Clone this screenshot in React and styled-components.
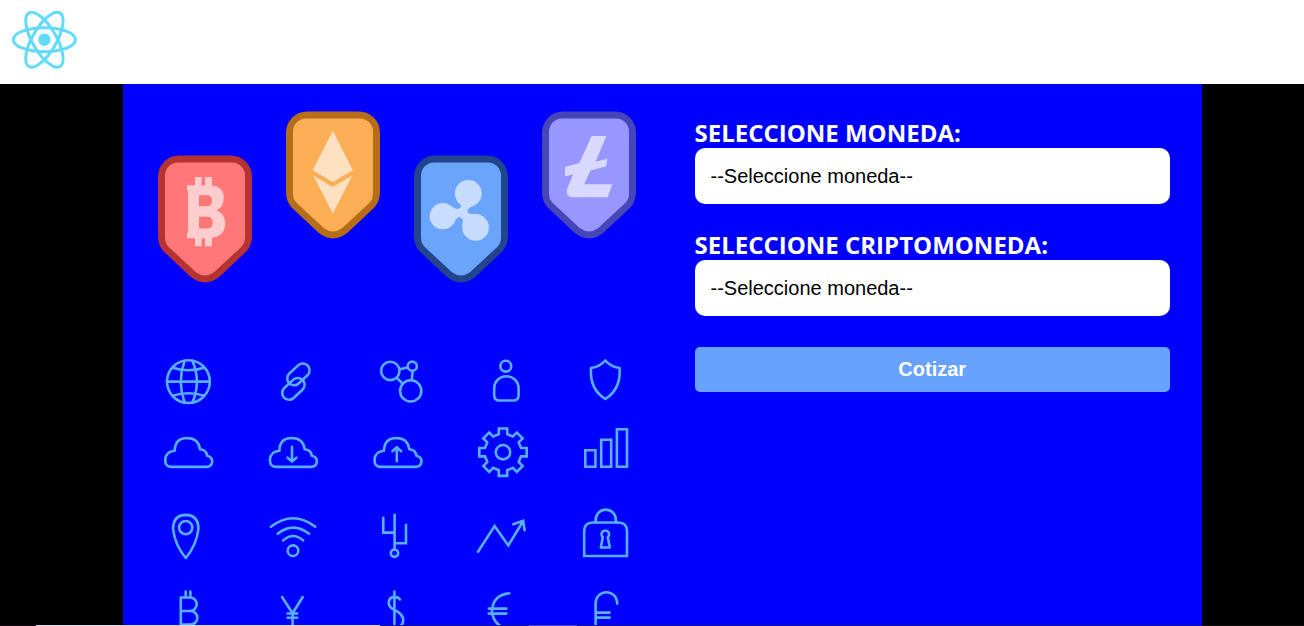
import React from "react";
import styled, { createGlobalStyle } from "styled-components";

const GlobalStyle = createGlobalStyle`
  *, *::before, *::after { box-sizing: border-box; }
  body { margin: 0; background: #000; font-family: "Open Sans", "Noto Sans", sans-serif; }
`;

const Page = styled.div`
  display: flex;
  flex-direction: column;
  height: 100vh;
  overflow: hidden;
  background: #000;
`;

const Header = styled.header`
  flex: none;
  height: 84px;
  background: #fff;
`;

const Logo = styled.svg`
  display: block;
  width: 88px;
  height: 80px;
`;

const Stage = styled.main`
  flex: 1;
  min-height: 0;
  padding: 0 102px 0 123px;
  overflow: hidden;
`;

const Panel = styled.section`
  display: grid;
  grid-template-columns: 1fr 1fr;
  min-height: 100%;
  background: #0000ff;
`;

const Artwork = styled.svg`
  display: block;
  width: 100%;
`;

const QuoteForm = styled.form`
  display: flex;
  flex-direction: column;
  padding: 34px 32px;
`;

const Field = styled.div`
  display: flex;
  flex-direction: column;
  margin-bottom: ${(p) => (p.$last ? "31px" : "26px")};
`;

const Label = styled.label`
  font-size: 24px;
  font-weight: 700;
  line-height: 30px;
  color: #fff;
  text-transform: uppercase;
  white-space: nowrap;
`;

const Select = styled.select`
  appearance: none;
  width: 100%;
  height: 56px;
  padding: 0 16px;
  border: 0;
  border-radius: 10px;
  background: #fff;
  color: #000;
  font: 20px "Liberation Sans", Arial, sans-serif;
`;

const SubmitButton = styled.button`
  height: 45px;
  border: 0;
  border-radius: 5px;
  background: #66a2fe;
  color: #fff;
  font: 700 20px "Liberation Sans", Arial, sans-serif;
  cursor: pointer;
`;

const BottomEdge = styled.footer`
  flex: none;
  display: grid;
  grid-template-columns: 36px 344px 149px 48px 1fr 102px;
  height: 1px;
`;

const EdgePart = styled.span`
  background: ${(p) => p.$color};
`;

const Badge = ({ x, y, fill, edge, children }) => (
  <g>
    <g transform={`translate(${x} ${y})`}>
      <path
        fill={edge}
        d="M21 0.3H73A21 21 0 0 1 94 21.3V80C94 87 92 93 87 97.5L62 121Q47 133.5 32 121L7 97.5C2 93 0 87 0 80V21.3A21 21 0 0 1 21 0.3Z"
      />
      <path
        fill={fill}
        d="M20 7.3H74A13 13 0 0 1 87 20.3V82C87 86 86 89 83 92L56 117Q47 123.5 38 117L11 92C8 89 7 86 7 82V20.3A13 13 0 0 1 20 7.3Z"
      />
    </g>
    <g fill="#fff" opacity="0.63">
      {children}
    </g>
  </g>
);

const CLOUD =
  "M171 466.7Q165.4 466.5 165.2 460Q165.5 451 174.7 450.5Q175 438 187 437.8Q198.5 438 200 449Q206.5 449.5 207 455.5Q212.3 456.5 212.2 461.5Q211.5 466.7 206.5 466.7Z";

const GearIcon = ({ x, y }) => {
  const points = [];
  for (let k = 0; k < 8; k += 1) {
    const a = (k * Math.PI) / 4;
    [[-4.2, -18], [-4.2, -23.7], [4.2, -23.7], [4.2, -18]].forEach(([px, py]) => {
      points.push(
        `${(x + px * Math.cos(a) - py * Math.sin(a)).toFixed(1)},${(
          y + px * Math.sin(a) + py * Math.cos(a)
        ).toFixed(1)}`
      );
    });
  }
  return (
    <g>
      <polygon points={points.join(" ")} />
      <circle cx={x} cy={y} r="7.2" />
    </g>
  );
};

const Illustration = () => (
  <Artwork viewBox="123 83.8 539.5 560" role="img" aria-label="Criptomonedas">
    <Badge x={158} y={155} fill="#ff7777" edge="#b53333">
      <path
        fillRule="evenodd"
        d="M187 185H195V176.7H201.7V185H205V176.7H212V185.3Q223.8 187 223.8 197Q223.8 207 216.5 210Q225.3 213.5 225.3 223Q225.3 235.5 212 237.6V246H205V238H201.7V246H195V238H187V232.5H188V190.5H187ZM199 195V206H207Q212 206 212 200.5Q212 195 207 195ZM199 216.5V228.3H207.5Q212.7 228.3 212.7 222.4Q212.7 216.5 207.5 216.5Z"
      />
    </Badge>
    <Badge x={286} y={111} fill="#fcae57" edge="#b56e17">
      <path d="M332.8 130.5L352.8 170L332.8 181.7L312.8 170ZM313.3 175.3L332.8 186.7L352.3 175.3L332.8 213.3Z" />
    </Badge>
    <Badge x={414} y={155} fill="#6aa5fb" edge="#22458d">
      <circle cx="468.3" cy="193.3" r="13.4" />
      <circle cx="442.8" cy="216" r="13.1" />
      <circle cx="475.6" cy="227.2" r="13.3" />
      <path d="M457 200.5C461.8 204.6 461.5 206.6 460 207.7C457.6 209.5 455 208.3 451 206L453 223.5C456.8 217.4 458.8 216.6 460.4 217.4C463.2 218.4 463 221 462.4 226L477 214C470 214.2 468 213.4 467.6 211.6C467.2 209.2 469 207.2 474.5 205Z" />
    </Badge>
    <Badge x={542} y={111} fill="#9797ff" edge="#4646b8">
      <path d="M591.7 135.7H606.3L595.6 161.5L607.3 158.5L606.3 166L590.5 170.3L584.3 184H612.3L607.7 197H572Q565.5 196 567 189L573 174.3L565 176V166.7L579.3 162.7Z" />
    </Badge>

    <g fill="none" stroke="#58aeff" strokeWidth="2.6" strokeLinejoin="round" strokeLinecap="round">
      <circle cx="188.4" cy="381.4" r="21.4" />
      <path d="M167 381.4H209.8M184.6 360.5Q177 381.4 184.6 402.3M192.4 360.5Q201.4 381.4 192.4 402.3M172.5 367.5Q188.4 372.5 204.3 367.5M172.5 395.5Q188.4 390.5 204.3 395.5" />

      <g transform="translate(298.4 374.2) rotate(-43)">
        <rect x="-12.8" y="-6.8" width="25.6" height="13.6" rx="6.8" />
      </g>
      <g transform="translate(293.4 388.7) rotate(-43)">
        <rect x="-12.8" y="-6.8" width="25.6" height="13.6" rx="6.8" />
      </g>

      <circle cx="390.3" cy="370.7" r="9.2" />
      <circle cx="412.3" cy="366" r="4.6" />
      <circle cx="410.7" cy="390.7" r="10.6" />
      <path d="M399.7 369L407.6 367.4M412.6 371L411.7 379.8M396.7 377.6L402.6 383.4" />

      <circle cx="505.8" cy="366" r="5.4" />
      <path d="M494.2 388.2a12.2 12.2 0 0 1 24.4 0v6.8q0 5.3-5.3 5.3h-13.8q-5.3 0-5.3-5.3z" />

      <path d="M605.3 360.3Q600 366.5 591 367.8Q589.5 389 605.3 398.8Q621.1 389 619.6 367.8Q610.6 366.5 605.3 360.3Z" />

      <path d={CLOUD} />
      <path d={CLOUD} transform="translate(104.7 0)" />
      <path d="M292 446.7V461M287.6 457.5L292 461.4L296.4 457.5" />
      <path d={CLOUD} transform="translate(209.3 0)" />
      <path d="M396.8 461V447.2M392.4 451L396.8 447L401.2 451" />

      <g strokeLinejoin="miter">
        <GearIcon x={503} y={452} />
        <path d="M585.3 450H595.4V466.6H585.3ZM601.2 439.5H611.2V466.6H601.2ZM616.9 429H627V466.6H616.9Z" />
      </g>

      <path d="M185.8 514.7Q198.5 515 198.4 529Q196.5 545 185.8 557.8Q175 545 173.1 529Q173 515 185.8 514.7Z" />
      <circle cx="185.7" cy="527.4" r="6.6" />

      <circle cx="293" cy="550.5" r="5.3" />
      <path d="M270.9 526.6Q293 509.5 315.3 526.6M277.7 533.6Q293 521.4 309 533.6M283.2 540.2Q293 531.4 303.2 540.2" />

      <circle cx="394.5" cy="553" r="3.7" />
      <path strokeLinejoin="miter" d="M394.6 514.5V549M383.3 517.6V532.4H394.6M406 524.6V543H394.6" />

      <path strokeLinejoin="miter" d="M478 551.5L494.6 525.8L508.3 545.3L523.2 520.8M513.2 524L523.2 520.6L524.6 530" />

      <path strokeLinejoin="miter" d="M584.2 555.8V531Q584.2 522.3 593 522.3H618.2Q627 522.3 627 531V555.8Z" />
      <path d="M595.7 522V519.5a10.1 10.1 0 0 1 20.2 0V522M602.8 537A3.8 3.8 0 1 1 607.8 537L609.8 547.3H600.8Z" />

      <path d="M185.7 591.3V597M190.4 591.3V597M180.8 597.3H190a6.7 6.7 0 0 1 0 13.5H180.8M190 610.8h.6a6.7 6.7 0 0 1 0 13.5H180.8V597.3M185.7 624.3V630M190.4 624.3V630" />
      <path d="M282.2 597L292.6 613L302.6 597M292.6 613V630M287.6 613.3H297.2M287.6 617.5H297.2" />
      <path d="M394.4 591.3V632M400 599.3Q398 596.6 394 596.7Q388.6 597.4 388.7 603Q389 607.5 395 610Q403 613.6 403.2 620Q403 627 394.6 628" />
      <path d="M509.2 593.2Q493.4 594.4 491.9 610.5Q493 625 507 628.5M488.8 608.4H506.4M488.8 613.4H506.4" />
      <path d="M617.2 603.5V602.8A10.8 10.8 0 0 0 595.6 602.8V632M595.6 612.4H609.6M595.6 617.4H609.6" />
    </g>
  </Artwork>
);

const SelectField = ({ id, label, last }) => (
  <Field $last={last}>
    <Label htmlFor={id}>{label}</Label>
    <Select id={id} defaultValue="">
      <option value="">--Seleccione moneda--</option>
    </Select>
  </Field>
);

const EDGE_COLORS = ["#120c14", "#dcd8f0", "#17129a", "#4a46b4", "#17129a", "#141414"];

export default function App() {
  return (
    <>
      <GlobalStyle />
      <Page>
        <Header>
          <Logo viewBox="0 0 88 80" role="img" aria-label="React">
            <circle cx="44.4" cy="39.7" r="6.2" fill="#61dafb" />
            <g fill="none" stroke="#61dafb" strokeWidth="3" transform="translate(44.4 39.7)">
              <ellipse rx="31" ry="12" />
              <ellipse rx="31" ry="12" transform="rotate(60)" />
              <ellipse rx="31" ry="12" transform="rotate(120)" />
            </g>
          </Logo>
        </Header>
        <Stage>
          <Panel>
            <Illustration />
            <QuoteForm onSubmit={(e) => e.preventDefault()}>
              <SelectField id="moneda" label="Seleccione moneda:" />
              <SelectField id="criptomoneda" label="Seleccione criptomoneda:" last />
              <SubmitButton type="submit">Cotizar</SubmitButton>
            </QuoteForm>
          </Panel>
        </Stage>
        <BottomEdge>
          {EDGE_COLORS.map((color, i) => (
            <EdgePart key={i} $color={color} />
          ))}
        </BottomEdge>
      </Page>
    </>
  );
}
